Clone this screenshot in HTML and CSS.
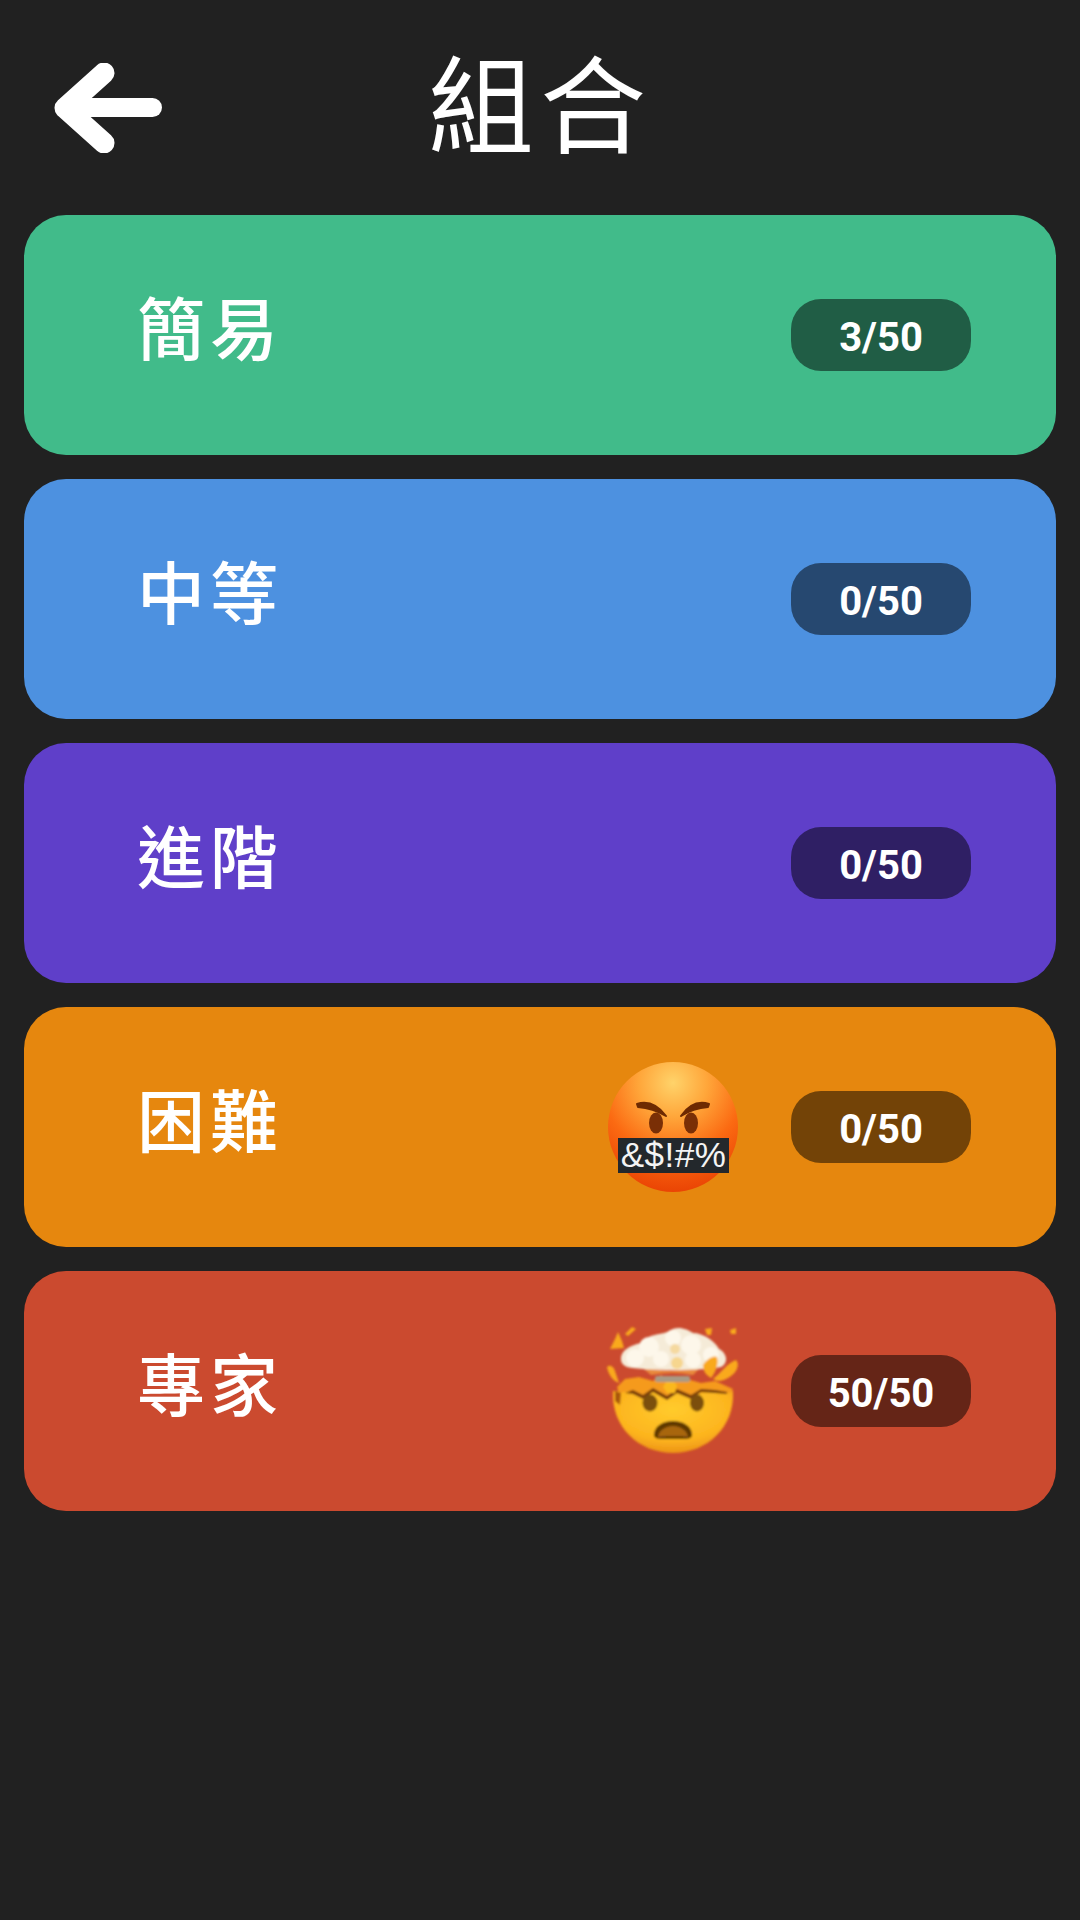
FILE: index.html
```html
<!DOCTYPE html>
<html lang="zh-Hant">

<head>
  <meta charset="UTF-8" />
  <meta name="viewport" content="width=device-width, initial-scale=1.0" />
  <title>組合</title>
  <link rel="stylesheet" href="styles.css">
</head>

<body>
  <header class="top-bar">
    <a href="#" class="back-btn">
      <svg width="108" height="90" viewBox="54 63 108 90">
        <path d="M104 73 L65 108 L104 143" fill="none" stroke="#fff" stroke-width="21" stroke-linecap="round" stroke-linejoin="round" />
        <path d="M70 107.500 H152.500" fill="none" stroke="#fff" stroke-width="19" stroke-linecap="round" />
      </svg>
    </a>
    <h1>組合</h1>
  </header>

  <main class="level-list">
    <a href="#" class="level-card easy">
      <span class="level-name">簡易</span>
      <span class="level-score">3/50</span>
    </a>

    <a href="#" class="level-card medium">
      <span class="level-name">中等</span>
      <span class="level-score">0/50</span>
    </a>

    <a href="#" class="level-card advanced">
      <span class="level-name">進階</span>
      <span class="level-score">0/50</span>
    </a>

    <a href="#" class="level-card hard">
      <span class="level-name">困難</span>
      <!-- swearing face -->
      <svg class="level-emoji" width="140" height="140" viewBox="0 0 140 140">
        <defs>
          <radialGradient id="angryFace" cx="50%" cy="16%" r="88%">
            <stop offset="0" stop-color="#ffd36a" />
            <stop offset="0.3" stop-color="#ffa63a" />
            <stop offset="0.62" stop-color="#fb6a12" />
            <stop offset="1" stop-color="#e83f02" />
          </radialGradient>
        </defs>
        <circle cx="70" cy="70" r="65" fill="url(#angryFace)" />
        <path d="M34 47 Q50 42 63 59 Q50 51 35 50 Z" fill="#6e2a02" stroke="#6e2a02" stroke-width="2" stroke-linejoin="round" />
        <path d="M106 47 Q90 42 78 59 Q90 51 105 50 Z" fill="#6e2a02" stroke="#6e2a02" stroke-width="2" stroke-linejoin="round" />
        <ellipse cx="53" cy="66" rx="7" ry="10.500" fill="#7a2f06" />
        <ellipse cx="88" cy="66" rx="7" ry="10.500" fill="#7a2f06" />
        <rect x="15" y="81" width="111" height="35" fill="#23282c" />
        <text x="70.500" y="110" text-anchor="middle" class="emoji-symbols">&amp;$!#%</text>
      </svg>
      <span class="level-score">0/50</span>
    </a>

    <a href="#" class="level-card expert">
      <span class="level-name">專家</span>
      <!-- exploding head -->
      <svg class="level-emoji" width="140" height="140" viewBox="0 0 140 140">
        <defs>
          <radialGradient id="headFill" cx="50%" cy="30%" r="75%">
            <stop offset="0" stop-color="#ffcb2c" />
            <stop offset="0.65" stop-color="#fdb41e" />
            <stop offset="1" stop-color="#e98c14" />
          </radialGradient>
          <filter id="soften" x="-10%" y="-10%" width="120%" height="120%">
            <feGaussianBlur stdDeviation="1" />
          </filter>
        </defs>
        <g filter="url(#soften)">
          <!-- head shell -->
          <path d="M10 70 L130 70 C132 106 104 132 70 132 C36 132 8 106 10 70 Z" fill="url(#headFill)" />
          <!-- molten rim and crack -->
          <path d="M14 66 L22 58 L36 56 L50 60 L58 54 L68 60 L84 58 L98 62 L112 60 L130 68 L128 72 L112 70 L98 72 L88 76 L74 70 L66 77 L50 70 L40 76 L26 70 L16 72 Z" fill="#f59a1c" />
          <path d="M22 72 L30 69 L40 74 L50 67 L64 75 L74 68 L88 74 L98 68 L112 69 L124 71 L124 73 L112 72 L98 71 L88 78 L74 72 L64 79 L50 71 L40 78 L30 73 Z" fill="#7a3d08" />
          <path d="M60 66 L66 56 L74 64 L72 72 L64 72 Z" fill="#fbb81c" />
          <path d="M12 70 L18 72 L17 84 L12 80 Z" fill="#a8560c" />
          <!-- eyes and mouth -->
          <ellipse cx="47" cy="82" rx="7.500" ry="8.500" fill="#7c4f08" />
          <ellipse cx="94" cy="82" rx="7" ry="8.500" fill="#7c4f08" />
          <path d="M51 114 C51 105 60 100 70 100 C80 100 89 105 89 114 C89 119 80 118 70 118 C60 118 51 119 51 114 Z" fill="#5f3706" />
          <path d="M55 116 C56 109 63 105 70 105 C77 105 84 109 85 116 C80 115 60 115 55 116 Z" fill="#a8660a" />
          <!-- smoke stem -->
          <rect x="52" y="55" width="35" height="6" rx="2" fill="#a89a84" />
          <path d="M36 44 Q70 56 102 42 L90 54 Q70 50 48 54 Z" fill="#e98a3c" />
          <!-- mushroom cloud -->
          <path d="M18 38 C18 28 30 24 38 22 C46 12 60 14 66 10 C74 4 84 8 90 12 C100 12 112 20 116 28 C124 32 126 42 118 46 C100 50 40 50 24 46 C20 44 18 42 18 38 Z" fill="#f5ebd8" />
          <g fill="#fdf7ea">
            <circle cx="32" cy="37" r="9" />
            <circle cx="46" cy="26" r="10" />
            <circle cx="58" cy="38" r="8" />
            <circle cx="70" cy="17" r="8" />
            <circle cx="88" cy="24" r="10" />
            <circle cx="90" cy="39" r="8" />
            <circle cx="108" cy="34" r="8" />
          </g>
          <circle cx="72" cy="28" r="5" fill="#f5d9a0" />
          <circle cx="74" cy="42" r="6" fill="#f6d68e" />
          <!-- debris -->
          <g fill="#f9a91e">
            <path d="M7 28 L12 18 L15 11 L19 20 L21 27 Z" />
            <path d="M22 13 L29 6 L33 8 L25 15 Z" />
            <path d="M102 8 L109 7 L108 14 L104 14 Z" />
            <path d="M127 9 L133 7 L133 13 L128 13 Z" />
            <path d="M4 46 C7 43 11 46 12 50 L16 62 C10 60 5 53 4 46 Z" />
            <path d="M100 44 C104 38 110 34 114 36 C116 44 112 52 108 57 C103 54 100 50 100 44 Z" />
            <path d="M110 58 C118 52 124 42 133 39 C137 43 134 51 128 55 C122 59 116 62 110 58 Z" />
          </g>
        </g>
      </svg>
      <span class="level-score">50/50</span>
    </a>
  </main>
</body>

</html>
```

FILE: styles.css
```css
body {
  margin: 0;
  min-height: 1920px;
  background-color: #212121;
  color: white;
  font-family: "Noto Sans CJK TC", "Noto Sans", sans-serif;
}

a {
  color: inherit;
  text-decoration: none;
}

/* back arrow + centered title */
.top-bar {
  height: 215px;
  display: grid;
  grid-template-columns: 1fr auto 1fr;
  align-items: center;
}

.back-btn {
  display: flex;
  padding-left: 54px;
}

.top-bar h1 {
  margin: 0 0 18px;
  font-size: 106px;
  font-weight: 400;
  letter-spacing: 6px;
  line-height: 1;
}

.level-list {
  padding: 0 24px;
  display: flex;
  flex-direction: column;
  gap: 24px;
}

.level-card {
  height: 240px;
  box-sizing: border-box;
  padding: 0 85px 0 113px;
  border-radius: 42px;
  display: flex;
  align-items: center;
}

.easy { background-color: #41bb8a; }
.medium { background-color: #4d91e0; }
.advanced { background-color: #5f3fc9; }
.hard { background-color: #e6870e; }
.expert { background-color: #cb4a2f; }

.level-name {
  flex: 1;
  margin-bottom: 18px;
  font-size: 68px;
  font-weight: 500;
  letter-spacing: 5px;
  line-height: 1;
}

.level-emoji {
  margin-right: 48px;
}

.emoji-symbols {
  font-family: "Liberation Sans", sans-serif;
  font-size: 35px;
  letter-spacing: 0.5px;
  fill: #f4f4f4;
}

.level-score {
  width: 180px;
  height: 72px;
  box-sizing: border-box;
  padding-top: 4px;
  border-radius: 30px;
  background-color: rgba(0, 0, 0, 0.5);
  display: flex;
  align-items: center;
  justify-content: center;
  font-family: Roboto, sans-serif;
  font-size: 40px;
  font-weight: 700;
}
```
